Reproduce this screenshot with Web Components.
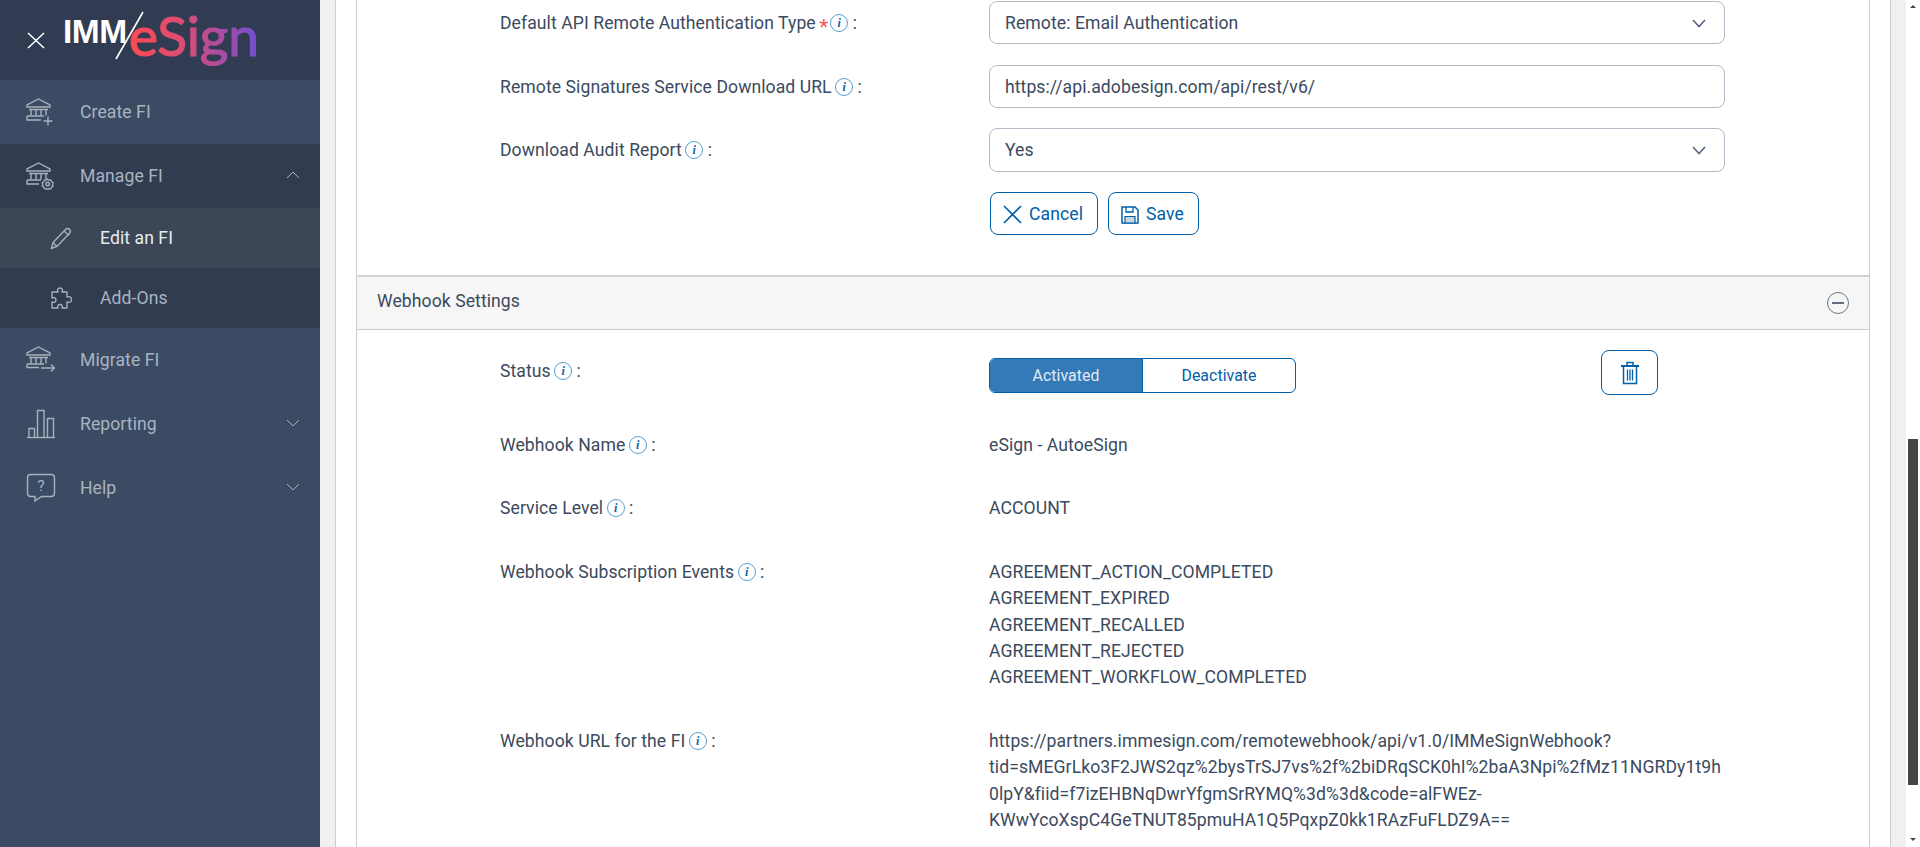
<!DOCTYPE html>
<html>
<head>
<meta charset="utf-8">
<title>IMM eSign</title>
<style>
  html, body { margin: 0; height: 100%; overflow: hidden; }
  body { font-family: "Roboto", sans-serif; font-size: 17.6px; letter-spacing: .07px; color: #3b4a5e; }
</style>
</head>
<body>
<imm-app>
  <imm-sidebar slot="side">
    <nav-item icon="bank-plus" tone="light">Create FI</nav-item>
    <nav-item icon="bank-gear" tone="dark" chevron="up">Manage FI</nav-item>
    <nav-item icon="pencil" tone="current" sub>Edit an FI</nav-item>
    <nav-item icon="puzzle" tone="dark" sub>Add-Ons</nav-item>
    <nav-item icon="bank-arrow" tone="light">Migrate FI</nav-item>
    <nav-item icon="bars" tone="light" chevron="down">Reporting</nav-item>
    <nav-item icon="help" tone="light" chevron="down">Help</nav-item>
  </imm-sidebar>

  <form-row gap="21" centered>
    <span slot="label">Default API Remote Authentication Type <req-mark></req-mark><info-tip></info-tip> :</span>
    <field-box select>Remote: Email Authentication</field-box>
  </form-row>
  <form-row gap="20" centered>
    <span slot="label">Remote Signatures Service Download URL <info-tip></info-tip> :</span>
    <field-box>https://api.adobesign.com/api/rest/v6/</field-box>
  </form-row>
  <form-row gap="20" centered>
    <span slot="label">Download Audit Report <info-tip></info-tip> :</span>
    <field-box select style="height:44px">Yes</field-box>
  </form-row>
  <form-row gap="40">
    <button-row>
      <outline-btn icon="x">Cancel</outline-btn>
      <outline-btn icon="save">Save</outline-btn>
    </button-row>
  </form-row>

  <panel-header>Webhook Settings</panel-header>

  <form-row gap="39" style="margin-top:28px">
    <span slot="label">Status <info-tip></info-tip> :</span>
    <status-line></status-line>
  </form-row>
  <form-row gap="37">
    <span slot="label">Webhook Name <info-tip></info-tip> :</span>
    eSign - AutoeSign
  </form-row>
  <form-row gap="37">
    <span slot="label">Service Level <info-tip></info-tip> :</span>
    ACCOUNT
  </form-row>
  <form-row gap="37">
    <span slot="label">Webhook Subscription Events <info-tip></info-tip> :</span>
    AGREEMENT_ACTION_COMPLETED<br>
    AGREEMENT_EXPIRED<br>
    AGREEMENT_RECALLED<br>
    AGREEMENT_REJECTED<br>
    AGREEMENT_WORKFLOW_COMPLETED
  </form-row>
  <form-row gap="37">
    <span slot="label">Webhook URL for the FI <info-tip></info-tip> :</span>
    https://partners.immesign.com/remotewebhook/api/v1.0/IMMeSignWebhook?tid=sMEGrLko3F2JWS2qz%2bysTrSJ7vs%2f%2biDRqSCK0hI%2baA3Npi%2fMz11NGRDy1t9h0lpY&amp;fiid=f7izEHBNqDwrYfgmSrRYMQ%3d%3d&amp;code=alFWEz-KWwYcoXspC4GeTNUT85pmuHA1Q5PqxpZ0kk1RAzFuFLDZ9A==
  </form-row>
</imm-app>

<script>
const BANK = `<path d="M1 9V7L12.500 1 24 7v2z"/><path d="M3 11.500h19M5 11.500v6M10 11.500v6M15 11.500v6M20 11.500v6"/>`;
const ICONS = {
  "bank-plus": `<svg width="30" height="28" viewBox="0 0 30 28">${BANK}<path d="M1 18h17M1 18v4h14"/><path d="M22 18.500v9M17.500 23h9"/></svg>`,
  "bank-gear": `<svg width="30" height="28" viewBox="0 0 30 28">${BANK}<path d="M1 18h14M1 18v4h12"/><circle cx="21.700" cy="22" r="1.800"/><path d="M21.700 17l1.400 1.300 1.900-.3.600 1.800 1.700 1-.9 1.600.9 1.600-1.700 1-.6 1.800-1.900-.3-1.400 1.300-1.400-1.300-1.900.3-.6-1.800-1.700-1 .9-1.600-.9-1.600 1.700-1 .6-1.800 1.900.3z" stroke-width="1.200"/></svg>`,
  "bank-arrow": `<svg width="30" height="28" viewBox="0 0 30 28">${BANK}<path d="M1 18h17M1 18v3.500h12"/><path d="M15 22h13.500M25 18.500L28.500 22 25 25.500"/></svg>`,
  "pencil": `<svg width="22" height="23" viewBox="0 0 22 23"><path d="M1.500 21.500l1.500-6L15.500 2.500c1.300-1.300 3-1.300 4 0 1 1 1 2.500 0 3.700L7 19.500z"/><path d="M3 15.500l4 4M14 4l5 4.500" stroke-width="1.200"/></svg>`,
  "puzzle": `<svg width="23" height="23" viewBox="0 0 23 23"><path d="M2 5H8C7 3 7.500 1 10 1S13 3 12 5H17V10C19 9 21.500 10 21.500 12.500S19 16 17 15V21H12C13 19 12 17.500 10 17.500S7 19 8 21H2V15C4 16 6 15 6 13S4 10 2 11Z" stroke-linejoin="round"/></svg>`,
  "bars": `<svg width="30" height="30" viewBox="0 0 30 30"><path d="M1 28.500h28"/><path d="M3 28V19.500h5.500V28M11.500 28V1.500h6.500V28M21.500 28V9.500h6V28"/></svg>`,
  "help": `<svg width="30" height="30" viewBox="0 0 30 30"><path d="M5 1.500h20c2.200 0 3.500 1.300 3.500 3.500v15c0 2.200-1.300 3.500-3.500 3.500H15.500L9 28v-4.500H5c-2.200 0-3.500-1.300-3.500-3.500V5C1.500 2.800 2.800 1.500 5 1.500z"/><text x="15" y="18" font-family="Roboto, sans-serif" font-size="15" text-anchor="middle" fill="currentColor" stroke="none">?</text></svg>`
};

class ImmApp extends HTMLElement {
  constructor() {
    super();
    this.attachShadow({ mode: "open" });
    this.shadowRoot.innerHTML = `
      <style>
        :host { display: flex; width: 1920px; height: 847px; overflow: hidden; background: #fff; }
        .main { width: 1586px; height: 847px; box-sizing: border-box; padding: 0 15px; background: #f0f0f0; overflow: hidden; }
        .outer { height: 100%; box-sizing: border-box; padding: 0 20px; background: #fff; border-left: 1px solid #ccc; border-right: 1px solid #ccc; }
        .inner { height: 100%; box-sizing: border-box; padding-top: 1px; background: #fff; border-left: 1px solid #ccc; border-right: 1px solid #ccc; overflow: hidden; }
        .bar { position: relative; width: 14px; height: 847px; background: #fff; }
        .thumb { position: absolute; left: 2px; top: 439px; width: 10px; height: 346px; background: #464646; }
        .up, .down { position: absolute; left: 4px; width: 0; height: 0; border-left: 3px solid transparent; border-right: 3px solid transparent; }
        .up { top: 5px; border-bottom: 3px solid #464646; }
        .down { top: 838px; border-top: 3px solid #464646; }
      </style>
      <slot name="side"></slot>
      <div class="main"><div class="outer"><div class="inner"><slot></slot></div></div></div>
      <div class="bar"><div class="up"></div><div class="thumb"></div><div class="down"></div></div>
    `;
  }
}

class ImmSidebar extends HTMLElement {
  constructor() {
    super();
    this.attachShadow({ mode: "open" });
    this.shadowRoot.innerHTML = `
      <style>
        :host { display: block; width: 320px; flex: none; height: 847px; background: #3b4b63; }
        .head { height: 80px; background: #313c52; display: flex; align-items: center; padding-left: 27px; }
        .close { flex: none; }
        .logo { display: block; margin-left: 19px; overflow: visible; }
      </style>
      <div class="head">
        <svg class="close" width="18" height="18" viewBox="0 0 18 18"><path d="M1 2l16 15M17 2L1 17" stroke="#fff" stroke-width="1.500" fill="none"/></svg>
        <svg class="logo" width="212" height="62" viewBox="0 0 212 62">
          <defs><linearGradient id="sg" gradientUnits="userSpaceOnUse" x1="66" x2="193" y1="0" y2="0">
            <stop offset="0" stop-color="#ff4a50"/><stop offset=".45" stop-color="#d94c78"/><stop offset=".75" stop-color="#a34ca8"/><stop offset="1" stop-color="#6f50d0"/>
          </linearGradient></defs>
          <text x="-1" y="34" font-family="Liberation Sans, sans-serif" font-weight="700" font-size="33.500" letter-spacing="-.5" fill="#fff">IMM</text>
          <path d="M52 50L79 3" stroke="#fff" stroke-width="1.600"/>
          <text x="65" y="47" font-family="Lato, sans-serif" font-weight="400" font-size="55" letter-spacing="-.1" fill="url(#sg)" stroke="url(#sg)" stroke-width="1.200">eSign</text>
        </svg>
      </div>
      <slot></slot>
    `;
  }
}

class NavItem extends HTMLElement {
  constructor() {
    super();
    this.attachShadow({ mode: "open" });
  }
  connectedCallback() {
    const icon = ICONS[this.getAttribute("icon")] || "";
    const chev = this.getAttribute("chevron");
    const chevPath = chev === "up" ? "M1 7l6-6 6 6" : "M1 1l6 6 6-6";
    this.shadowRoot.innerHTML = `
      <style>
        :host { display: flex; align-items: center; height: 64px; padding-left: 26px; color: #aab3c0; font-size: 17.600px; position: relative; }
        :host([tone="dark"]) { background: #313c50; }
        :host([tone="current"]) { background: #3c4657; color: #e6ebf0; }
        :host([sub]) { height: 60px; padding-left: 50px; }
        .ic { width: 54px; flex: none; display: flex; align-items: center; color: #a9b1bd; }
        :host([sub]) .ic { width: 50px; }
        .ic svg { fill: none; stroke: currentColor; stroke-width: 1.400; }
        .chev { position: absolute; left: 286px; top: 50%; margin-top: -5px; fill: none; stroke: #a9b1bd; stroke-width: 1; }
      </style>
      <span class="ic">${icon}</span>
      <slot></slot>
      ${chev ? `<svg class="chev" width="14" height="8" viewBox="0 0 14 8"><path d="${chevPath}"/></svg>` : ""}
    `;
  }
}

class FormRow extends HTMLElement {
  constructor() {
    super();
    this.attachShadow({ mode: "open" });
  }
  connectedCallback() {
    const gap = this.getAttribute("gap") || 21;
    this.shadowRoot.innerHTML = `
      <style>
        :host { display: grid; grid-template-columns: 489px 736px; padding-left: 143px; margin-bottom: ${gap}px; line-height: 26.400px; color: #3b4a5e; }
        :host([centered]) .lab { padding-top: 9px; }
        .val { overflow-wrap: anywhere; min-width: 0; }
      </style>
      <div class="lab"><slot name="label"></slot></div>
      <div class="val"><slot></slot></div>
    `;
  }
}

class InfoTip extends HTMLElement {
  constructor() {
    super();
    this.attachShadow({ mode: "open" });
    this.shadowRoot.innerHTML = `
      <style>
        :host { display: inline-flex; width: 18px; height: 18px; box-sizing: border-box; border: 1px solid #5b9fcf; border-radius: 50%;
          align-items: center; justify-content: center; vertical-align: 2px; margin: 0 0 0 -1px; }
        span { font: italic bold 12px/1 "Liberation Serif", serif; color: #0a62a8; }
      </style>
      <span>i</span>
    `;
  }
}

class ReqMark extends HTMLElement {
  constructor() {
    super();
    this.attachShadow({ mode: "open" });
    this.shadowRoot.innerHTML = `
      <style>
        :host { display: inline-block; color: #ef5a5a; font-size: 21px; line-height: 1; margin: 0 3px 0 -1px; vertical-align: -5px; }
      </style>*
    `;
  }
}

class FieldBox extends HTMLElement {
  constructor() {
    super();
    this.attachShadow({ mode: "open" });
    this.shadowRoot.innerHTML = `
      <style>
        :host { display: flex; align-items: center; justify-content: space-between; box-sizing: border-box; width: 736px; height: 43px;
          padding: 1px 18px 0 15px; border: 1px solid #b3b9c6; border-radius: 8px; background: #fff; color: #3b4a5e; }
        svg { display: none; }
        :host([select]) svg { display: block; }
      </style>
      <slot></slot>
      <svg width="14" height="9" viewBox="0 0 14 9"><path d="M1 1l6 6.500L13 1" fill="none" stroke="#5a6880" stroke-width="1.700"/></svg>
    `;
  }
}

class ButtonRow extends HTMLElement {
  constructor() {
    super();
    this.attachShadow({ mode: "open" });
    this.shadowRoot.innerHTML = `<style>:host { display: flex; gap: 10px; padding-left: 1px; }</style><slot></slot>`;
  }
}

class OutlineBtn extends HTMLElement {
  constructor() {
    super();
    this.attachShadow({ mode: "open" });
  }
  connectedCallback() {
    const kind = this.getAttribute("icon");
    const svg = kind === "x"
      ? `<svg width="19" height="19" viewBox="0 0 19 19"><path d="M1 1l17 17M18 1L1 18" fill="none" stroke="#0060a9" stroke-width="1.600"/></svg>`
      : `<svg width="18" height="18" viewBox="0 0 18 18"><path d="M1 1h13l3 3v13H1z" fill="none" stroke="#0060a9" stroke-width="1.500"/><path d="M5 1v5h7V1" fill="none" stroke="#0060a9" stroke-width="1.300"/><path d="M4 10.500h10V17H4z" fill="#c9d6e2" stroke="#0060a9" stroke-width="1.200"/></svg>`;
    this.shadowRoot.innerHTML = `
      <style>
        :host { display: inline-flex; align-items: center; gap: 7px; height: 43px; box-sizing: border-box; padding: 2px 14px 0 12px;
          border: 1px solid #0060a9; border-radius: 8px; color: #0060a9; background: #fff; }
      </style>
      ${svg}<slot></slot>
    `;
  }
}

class PanelHeader extends HTMLElement {
  constructor() {
    super();
    this.attachShadow({ mode: "open" });
    this.shadowRoot.innerHTML = `
      <style>
        :host { display: flex; align-items: center; justify-content: space-between; height: 55px; box-sizing: border-box; padding: 0 19px 0 20px;
          background: #f6f6f6; border-top: 2px solid #d0d0d0; border-bottom: 1px solid #ccc; border-top-left-radius: 2px; color: #3b4a5e; }
        .t { padding-bottom: 5px; }
      </style>
      <span class="t"><slot></slot></span>
      <svg width="24" height="24" viewBox="0 0 24 24"><circle cx="12" cy="12" r="10.500" fill="none" stroke="#66788f" stroke-width="1"/><path d="M6 12h12" stroke="#2f3e55" stroke-width="1.500"/></svg>
    `;
  }
}

class StatusLine extends HTMLElement {
  constructor() {
    super();
    this.attachShadow({ mode: "open" });
    this.shadowRoot.innerHTML = `
      <style>
        :host { display: flex; align-items: flex-start; justify-content: space-between; width: 669px; height: 35px; }
        .toggle { display: flex; width: 307px; height: 35px; box-sizing: border-box; border: 1px solid #0060a9; border-radius: 6px; overflow: hidden; font-size: 15.840px; line-height: 33px; text-align: center; }
        .on { flex: 1; background: #337ab7; color: #e3e9ef; border-right: 1px solid #0060a9; }
        .off { flex: 1; color: #0060a9; }
        .trash { width: 57px; height: 45px; box-sizing: border-box; margin-top: -8px; border: 1px solid #0060a9; border-radius: 8px; display: flex; align-items: center; justify-content: center; }
      </style>
      <div class="toggle"><div class="on">Activated</div><div class="off">Deactivate</div></div>
      <div class="trash">
        <svg width="20" height="24" viewBox="0 0 20 24" fill="none" stroke="#0060a9"><path d="M1 5h18" stroke-width="2"/><path d="M7 4.500V1.500h6v3" stroke-width="1.500"/><path d="M3.500 6v16.500h13V6" stroke-width="1.500"/><path d="M7.500 8.500v11M10 8.500v11M12.500 8.500v11" stroke-width="1.300"/></svg>
      </div>
    `;
  }
}

customElements.define("imm-app", ImmApp);
customElements.define("imm-sidebar", ImmSidebar);
customElements.define("nav-item", NavItem);
customElements.define("form-row", FormRow);
customElements.define("info-tip", InfoTip);
customElements.define("req-mark", ReqMark);
customElements.define("field-box", FieldBox);
customElements.define("button-row", ButtonRow);
customElements.define("outline-btn", OutlineBtn);
customElements.define("panel-header", PanelHeader);
customElements.define("status-line", StatusLine);
</script>
</body>
</html>
